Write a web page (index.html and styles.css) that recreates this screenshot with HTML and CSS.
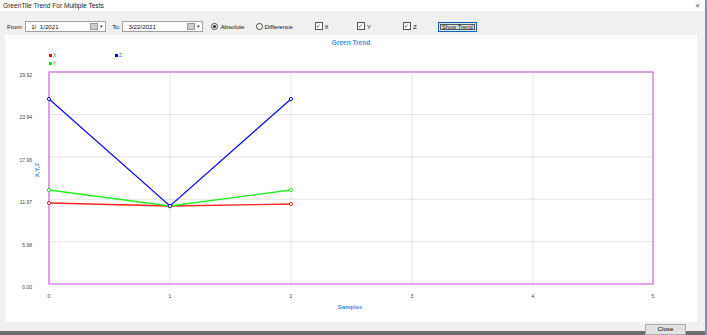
FILE: index.html
```html
<!DOCTYPE html>
<html lang="en">
<head>
    <meta charset="UTF-8">
    <title>GreenTile Trend For Multiple Tests</title>
    <link rel="stylesheet" href="styles.css">
</head>
<body>
<div class="window">
    <div class="titlebar">
        <span class="title">GreenTile Trend For Multiple Tests</span>
        <span class="close-x">&#x2715;</span>
    </div>
    <div class="toolbar">
        <span class="lbl">From:</span>
        <div class="datebox from">
            <span class="date">1/&nbsp; 1/2021</span>
            <span class="cal"></span><span class="arrow">&#9662;</span>
        </div>
        <span class="lbl to">To:</span>
        <div class="datebox">
            <span class="date">3/22/2021</span>
            <span class="cal"></span><span class="arrow">&#9662;</span>
        </div>
        <label class="radio on"><span class="dot"></span>Absolute</label>
        <label class="radio diff"><span class="dot"></span>Difference</label>
        <label class="check cx"><span class="box">&#10003;</span>X</label>
        <label class="check cy"><span class="box">&#10003;</span>Y</label>
        <label class="check cz"><span class="box">&#10003;</span>Z</label>
        <button class="show">Show Trend</button>
    </div>
    <div class="panel">
        <svg class="chart" width="692" height="287" viewBox="0 0 692 287">
            <text class="ctitle" x="346" y="10" text-anchor="middle">Green Trend</text>

            <rect x="44" y="19" width="3" height="3" fill="#ff0000"/>
            <text class="legend" x="48" y="22">X</text>
            <rect x="110" y="19" width="3" height="3" fill="#0000ff"/>
            <text class="legend" x="114" y="22">Z</text>
            <rect x="44" y="27" width="3" height="3" fill="#00ee00"/>
            <text class="legend" x="48" y="30">Y</text>

            <g class="grid">
                <line x1="44" y1="79.4" x2="648" y2="79.4"/>
                <line x1="44" y1="121.8" x2="648" y2="121.8"/>
                <line x1="44" y1="164.2" x2="648" y2="164.2"/>
                <line x1="44" y1="206.6" x2="648" y2="206.6"/>
                <line x1="165" y1="37" x2="165" y2="249"/>
                <line x1="286" y1="37" x2="286" y2="249"/>
                <line x1="407" y1="37" x2="407" y2="249"/>
                <line x1="528" y1="37" x2="528" y2="249"/>
            </g>
            <rect class="frame" x="44" y="37" width="604" height="212"/>

            <g class="ylab">
                <text x="27" y="42">29.92</text>
                <text x="27" y="84.4">23.94</text>
                <text x="27" y="126.8">17.96</text>
                <text x="27" y="169.2">11.97</text>
                <text x="27" y="211.6">5.98</text>
                <text x="27" y="254">0.00</text>
            </g>
            <g class="xlab">
                <text x="44" y="263">0</text>
                <text x="165" y="263">1</text>
                <text x="286" y="263">2</text>
                <text x="407" y="263">3</text>
                <text x="528" y="263">4</text>
                <text x="648" y="263">5</text>
            </g>
            <text class="axis" x="345" y="274" text-anchor="middle">Samples</text>
            <text class="axis" x="0" y="0" text-anchor="middle" transform="translate(34 135) rotate(-90)">X,Y,Z</text>

            <polyline class="series" stroke="#ff2020" points="44,168 165,171 286,169"/>
            <polyline class="series" stroke="#22ee22" points="44,155 165,171 286,155"/>
            <polyline class="series" stroke="#1010ee" points="44,64 165,171 286,64"/>

            <g class="pts" stroke="#ff2020">
                <circle cx="44" cy="168" r="1.6"/><circle cx="286" cy="169" r="1.6"/>
            </g>
            <g class="pts" stroke="#22ee22">
                <circle cx="44" cy="155" r="1.6"/><circle cx="286" cy="155" r="1.6"/>
            </g>
            <g class="pts" stroke="#1010ee">
                <circle cx="44" cy="64" r="1.6"/><circle cx="165" cy="171" r="1.8"/><circle cx="286" cy="64" r="1.6"/>
            </g>
        </svg>
    </div>
    <div class="footer">
        <button class="closebtn">Close</button>
    </div>
</div>
</body>
</html>
```

FILE: styles.css
```css
html, body {
  margin: 0;
  padding: 0;
}
body {
  width: 707px;
  height: 335px;
  overflow: hidden;
  font-family: 'Liberation Sans', Arial, sans-serif;
  font-size: 6.5px;
  color: #111;
}
.window {
  width: 705px;
  height: 335px;
  background: #f0f0f0;
  border-right: 2px solid #4aa3e8;
  display: flex;
  flex-direction: column;
}
.titlebar {
  height: 12px;
  background: #fff;
  display: flex;
  align-items: center;
  justify-content: space-between;
  padding: 0 5px 0 3px;
}
.title {
  font-size: 6.6px;
  color: #222;
}
.close-x {
  font-size: 6px;
  color: #555;
}
.toolbar {
  height: 25px;
  display: flex;
  align-items: center;
  padding: 6px 0 0 7px;
  box-sizing: border-box;
}
.lbl {
  font-size: 6.2px;
  margin-right: 2px;
}
.lbl.to {
  margin-left: 6px;
}
.datebox {
  width: 81px;
  height: 11px;
  box-sizing: border-box;
  background: #fff;
  border: 1px solid #a0a0a0;
  display: flex;
  align-items: center;
  padding: 0 2px 0 5px;
}
.date {
  flex: 1;
  font-size: 6.2px;
}
.cal {
  width: 6px;
  height: 5px;
  border: 1px solid #999;
  background: #ccc;
  margin-right: 2px;
}
.arrow {
  font-size: 5px;
  color: #333;
}
.radio, .check {
  display: flex;
  align-items: center;
  font-size: 6.2px;
}
.radio .dot {
  width: 5px;
  height: 5px;
  border: 1px solid #444;
  border-radius: 50%;
  margin-right: 2px;
  display: flex;
  align-items: center;
  justify-content: center;
  background: #fff;
}
.radio.on .dot::after {
  content: '';
  width: 3px;
  height: 3px;
  border-radius: 50%;
  background: #222;
}
.radio.on {
  margin-left: 8px;
}
.radio.diff {
  margin-left: 11px;
}
.check .box {
  width: 6px;
  height: 6px;
  border: 1px solid #555;
  background: #fff;
  font-size: 6px;
  line-height: 6px;
  text-align: center;
  margin-right: 2px;
  color: #333;
}
.check.cx { margin-left: 22px; }
.check.cy { margin-left: 28px; }
.check.cz { margin-left: 32px; }
.show {
  margin-left: 21px;
  width: 39px;
  height: 10px;
  padding: 0;
  font-family: inherit;
  font-size: 5.8px;
  line-height: 8px;
  color: #111;
  background: #e1e1e1;
  border: 1px solid #0a64c0;
  box-shadow: inset 0 0 0 1px #e1e1e1, inset 0 0 0 2px #555;
  margin-top: 2px;
}
.panel {
  margin: 0 8px 0 5px;
  height: 287px;
  background: #fff;
}
.chart {
  display: block;
  font-family: 'Liberation Sans', Arial, sans-serif;
}
.ctitle {
  font-size: 6.5px;
  font-weight: bold;
  fill: #4a8fd8;
}
.legend {
  font-size: 4.8px;
  fill: #555;
}
.grid line {
  stroke: #dcdcdc;
  stroke-width: 0.8;
}
.frame {
  fill: none;
  stroke: #cf7bdc;
  stroke-width: 1.4;
}
.ylab text {
  font-size: 5px;
  fill: #444;
  text-anchor: end;
}
.xlab text {
  font-size: 5px;
  fill: #444;
  text-anchor: middle;
}
.axis {
  font-size: 6px;
  font-weight: bold;
  fill: #3a8fd6;
}
.series {
  fill: none;
  stroke-width: 1.3;
}
.pts circle {
  fill: #fff;
  stroke-width: 1;
}
.footer {
  flex: 1;
  display: flex;
  justify-content: flex-end;
  align-items: flex-start;
  padding: 2px 19px 0 0;
  background: linear-gradient(to bottom, #f0f0f0 9px, #6e6e6e 9px);
}
.closebtn {
  width: 41px;
  height: 11px;
  padding: 0 0 2px 0;
  font-family: inherit;
  font-size: 6.2px;
  background: #e1e1e1;
  border: 1px solid #adadad;
}
```
